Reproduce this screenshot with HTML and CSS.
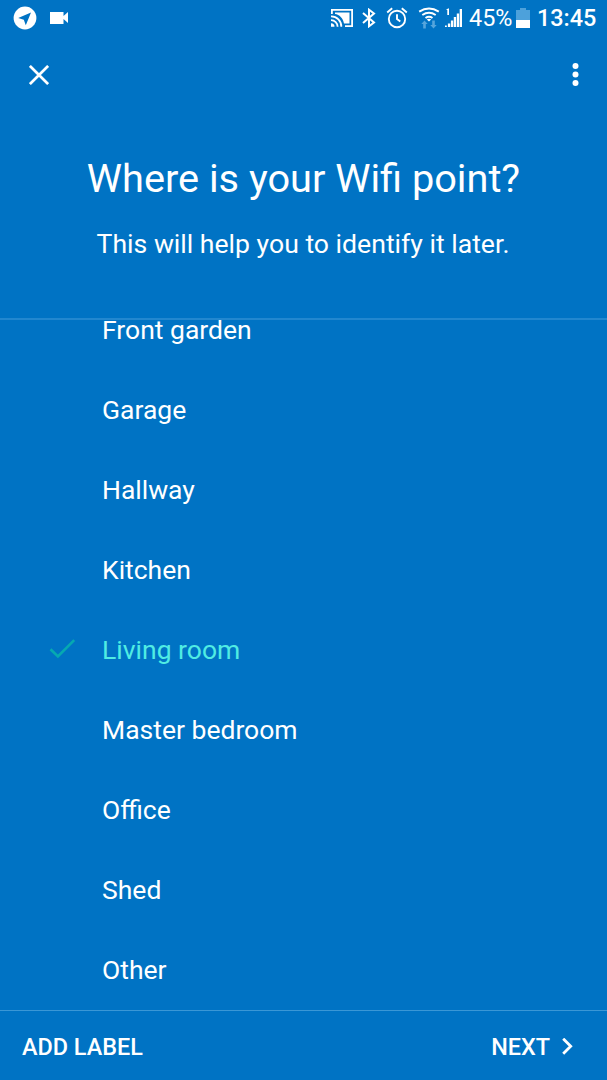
FILE: index.html
```html
<!DOCTYPE html>
<html lang="en">
   <head>
      <meta charset="UTF-8">
      <meta name="viewport" content="width=device-width, initial-scale=1.0">
      <link rel="stylesheet" href="styles.css">
      <title>Wifi point</title>
   </head>
   <body>
      <div class="screen">
         <div class="status">
            <svg class="telegram" width="24" height="24" viewBox="0 0 24 24">
               <circle cx="12" cy="12" r="11.4" fill="#fff"/>
               <path d="M18 6.600L5.200 12l5.600 1.700 2 5.500z" fill="#0073c4"/>
            </svg>
            <svg class="video" width="20" height="14" viewBox="0 0 20 14">
               <path d="M1 1h13.500v4L19 1v11l-4.500-4v4.900H1z" fill="#fff"/>
            </svg>
            <div class="status-right">
               <svg class="cast" width="24" height="20" viewBox="0 0 24 20" fill="none" stroke="#fff" stroke-width="1.8">
                  <path d="M1.900 6V1.900h20.200v16.200H15"/>
                  <path d="M5 4.500h14.500v11H14C13 10 9.500 6.500 5 6z" fill="#fff" stroke="none"/>
                  <path d="M1 8.400a10 10 0 0 1 10.300 10.400M1 12.200a6.500 6.500 0 0 1 6.600 6.600"/>
                  <path d="M1 15.300a3.500 3.500 0 0 1 3.500 3.500H1z" fill="#fff" stroke="none"/>
               </svg>
               <svg class="bluetooth" width="14" height="20" viewBox="0 0 14 20" fill="none" stroke="#fff" stroke-width="2">
                  <path d="M1 5l11 9.500L7 18.300V1.700l5 3.800L1 15"/>
               </svg>
               <svg class="alarm" width="22" height="22" viewBox="0 0 22 22" fill="none" stroke="#fff" stroke-width="1.900">
                  <circle cx="11" cy="12" r="8.200"/>
                  <path d="M1.200 5.500l5-4.200M20.800 5.500l-5-4.200M11 7.300V12l3.300 2.500"/>
               </svg>
               <svg class="wifi" width="22" height="22" viewBox="0 0 22 22" fill="none" stroke="#fff" stroke-width="1.900">
                  <path d="M1.200 4.600q9.800-6.300 19.600 0M4.300 8q6.700-4.600 13.400 0M7.500 11q3.500-2.500 7 0"/>
                  <path d="M8.800 12.500q2.200-1.300 4.400 0L11 14.500z" fill="#fff" stroke="none"/>
                  <path d="M6.500 13.500L9.700 17H7.800v4.500H5.200V17H3.300zM15.500 21.500l3.200-3.500h-1.900v-4.500h-2.600V18h-1.900z" fill="#55a5dc" stroke="none"/>
               </svg>
               <svg class="signal" width="17" height="20" viewBox="0 0 17 20" fill="#fff">
                  <path d="M0 17.500h1.800V19H0zM2.900 15.500h2.300V19H2.900zM5.900 12.500h2.300V19H5.900zM8.800 9h2.300v10H8.800zM11.800 5.500h2.300V19h-2.300zM14.700 1H17v18h-2.300z"/>
                  <path d="M1.500 1.200L4 .3V7H2.300V2h-.8z"/>
               </svg>
               <span class="percent">45%</span>
               <svg class="battery" width="14" height="21" viewBox="0 0 14 21">
                  <path d="M0 2h4V0h6v2h4v10H0z" fill="#4da1db"/>
                  <path d="M0 12h14v8H0z" fill="#fff"/>
               </svg>
               <span class="clock">13:45</span>
            </div>
         </div>
         <div class="toolbar">
            <svg width="20" height="20" viewBox="0 0 20 20" fill="none" stroke="#fff" stroke-width="2.700">
               <path d="M.9.900l18.200 18.200M19.100.900L.9 19.100"/>
            </svg>
            <svg width="7" height="24" viewBox="0 0 7 24" fill="#fff">
               <circle cx="3.500" cy="3" r="3"/>
               <circle cx="3.500" cy="11.500" r="3"/>
               <circle cx="3.500" cy="20" r="3"/>
            </svg>
         </div>
         <div class="heading">
            <h1>Where is your Wifi point?</h1>
            <p>This will help you to identify it later.</p>
         </div>
         <ul class="rooms">
            <li>Front garden</li>
            <li>Garage</li>
            <li>Hallway</li>
            <li>Kitchen</li>
            <li class="selected">
               <svg class="check" width="28" height="22" viewBox="0 0 28 22" fill="none" stroke="#06a9b1" stroke-width="2.600">
                  <path d="M1.500 11.200l7.400 7.300L25.200 2.200"/>
               </svg>
               Living room
            </li>
            <li>Master bedroom</li>
            <li>Office</li>
            <li>Shed</li>
            <li>Other</li>
         </ul>
         <div class="footer">
            <span class="add">ADD LABEL</span>
            <span class="next">NEXT
               <svg width="12" height="18" viewBox="0 0 12 18" fill="none" stroke="#fff" stroke-width="2.800">
                  <path d="M1.200 .7L8.700 8.200l-7.500 7.500"/>
               </svg>
            </span>
         </div>
      </div>
   </body>
</html>
```
FILE: styles.css
```css
body {
margin: 0;
background-color: #0073c4;
color: #fff;
font-family: Roboto, sans-serif;
}
.screen {
display: flex;
flex-direction: column;
height: 1080px;
overflow: hidden;
}
svg {
display: block;
flex: none;
}
.status {
display: flex;
align-items: center;
height: 36px;
padding: 0 12px 0 13px;
}
.video {
margin-left: 12px;
}
.status-right {
display: flex;
align-items: center;
margin-left: auto;
}
.bluetooth {
margin-left: 8px;
}
.alarm {
margin-left: 10px;
}
.wifi {
margin-left: 10px;
}
.signal {
margin-left: 5px;
}
.percent {
width: 43px;
margin-left: 7px;
font-size: 23.4px;
line-height: 40px;
}
.battery {
margin-left: 4px;
}
.clock {
width: 58px;
margin-left: 7px;
font-size: 23.4px;
font-weight: 500;
line-height: 40px;
}
.toolbar {
display: flex;
justify-content: space-between;
align-items: center;
height: 77px;
padding: 0 28px 0 29px;
}
.heading {
height: 205px;
border-bottom: 2px solid #2287cf;
text-align: center;
}
h1 {
margin: 42px 0 0;
font-size: 39.7px;
font-weight: 400;
line-height: 48px;
}
p {
margin: 24px 1px 0 0;
font-size: 26.6px;
line-height: 34px;
}
.rooms {
flex: 1;
margin: 0;
padding: 0;
list-style: none;
overflow: hidden;
}
.rooms li {
display: flex;
align-items: center;
height: 80.1px;
padding-left: 102px;
font-size: 26.5px;
}
/* list is scrolled a little, first row starts above the divider */
.rooms li:first-child {
margin-top: -31px;
}
.rooms .selected {
padding-left: 49px;
color: #50ece3;
}
.check {
margin-right: 25px;
}
.footer {
display: flex;
justify-content: space-between;
align-items: center;
height: 70px;
padding: 2px 33px 0 22px;
box-sizing: border-box;
border-top: 1px solid #3a97d6;
font-size: 23.4px;
font-weight: 500;
}
.next {
display: flex;
align-items: center;
gap: 12px;
}
```
